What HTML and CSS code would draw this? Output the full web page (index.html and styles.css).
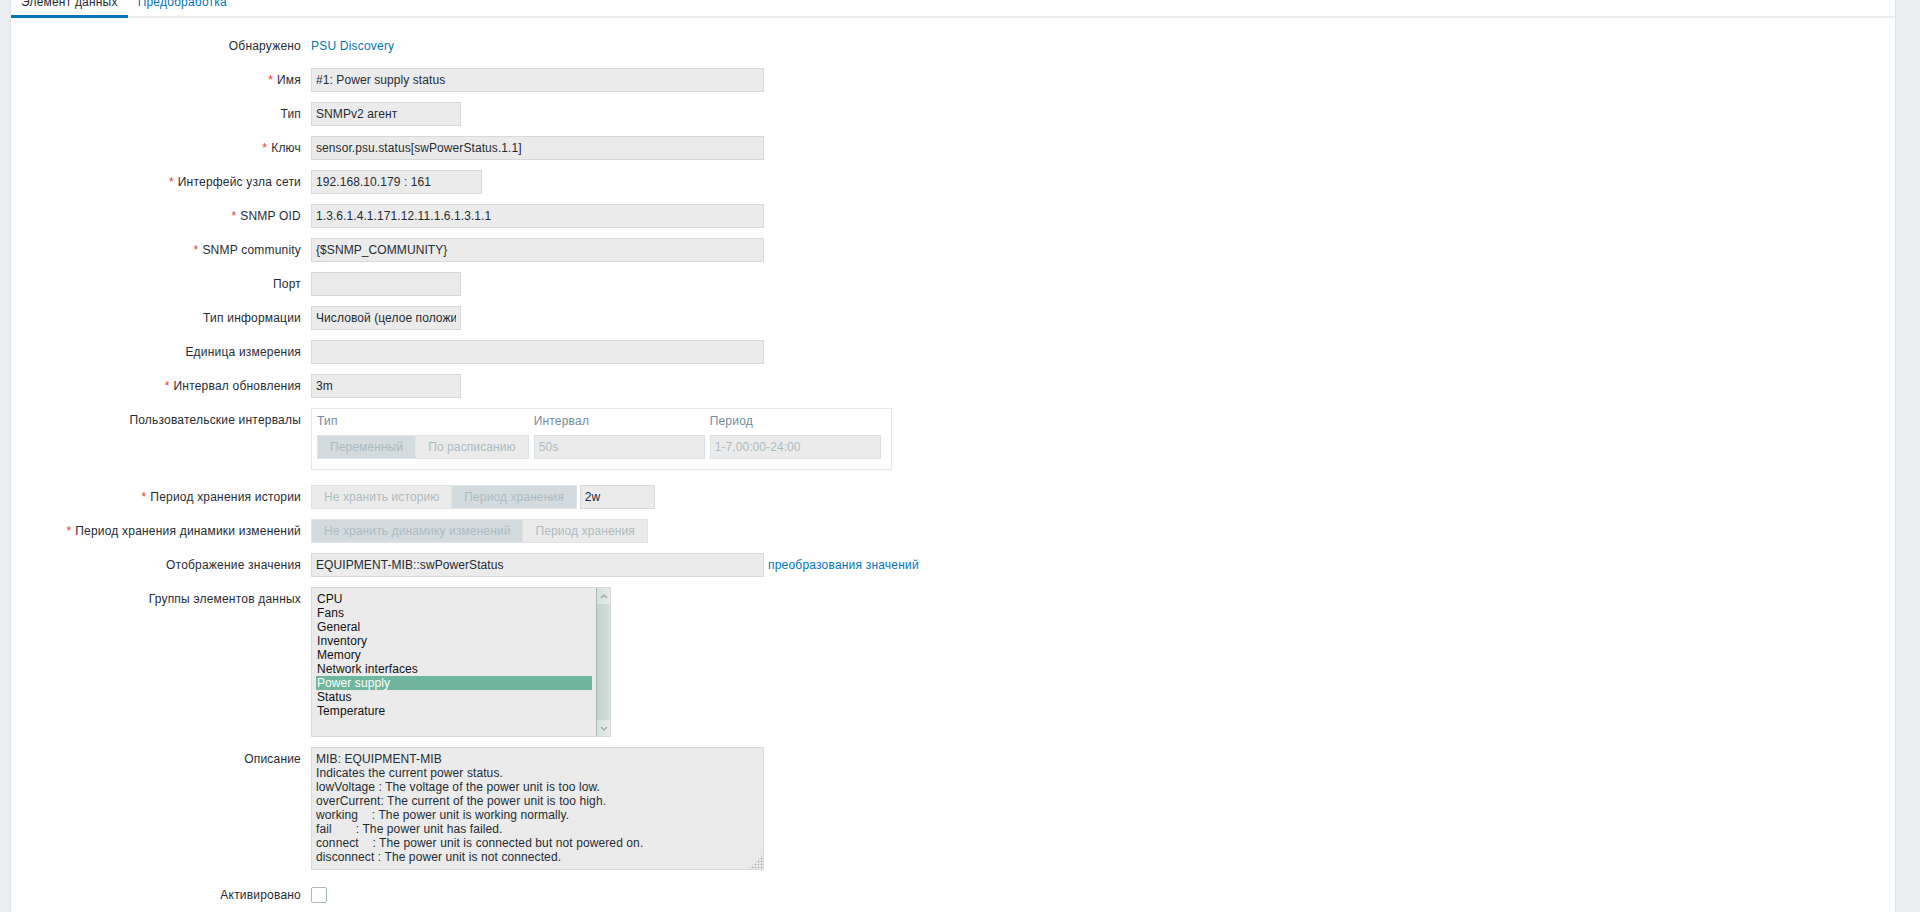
FILE: index.html
```html
<!DOCTYPE html>
<html>
  <head>
    <meta charset="utf-8">
    <title>Элемент данных</title>
    <link rel="stylesheet" href="styles.css">
  </head>
  <body>
    <div class="wrapper">
      <div class="table-forms-container">
        <ul class="tabs-nav">
          <li class="tab active"><a>Элемент данных</a></li>
          <li class="tab"><a href="#preprocessing">Предобработка</a></li>
        </ul>

        <ul class="form-list">
          <li class="form-row">
            <label class="form-label">Обнаружено</label>
            <div class="form-field"><a href="#discovery">PSU Discovery</a></div>
          </li>
          <li class="form-row">
            <label class="form-label required">Имя</label>
            <div class="form-field"><input class="input w-standard" value="#1: Power supply status" readonly></div>
          </li>
          <li class="form-row">
            <label class="form-label">Тип</label>
            <div class="form-field"><input class="input w-small" value="SNMPv2 агент" readonly></div>
          </li>
          <li class="form-row">
            <label class="form-label required">Ключ</label>
            <div class="form-field"><input class="input w-standard" value="sensor.psu.status[swPowerStatus.1.1]" readonly></div>
          </li>
          <li class="form-row">
            <label class="form-label required">Интерфейс узла сети</label>
            <div class="form-field"><input class="input w-select" value="192.168.10.179 : 161" readonly></div>
          </li>
          <li class="form-row">
            <label class="form-label required">SNMP OID</label>
            <div class="form-field"><input class="input w-standard" value="1.3.6.1.4.1.171.12.11.1.6.1.3.1.1" readonly></div>
          </li>
          <li class="form-row">
            <label class="form-label required">SNMP community</label>
            <div class="form-field"><input class="input w-standard" value="{$SNMP_COMMUNITY}" readonly></div>
          </li>
          <li class="form-row">
            <label class="form-label">Порт</label>
            <div class="form-field"><input class="input w-small" value="" readonly></div>
          </li>
          <li class="form-row">
            <label class="form-label">Тип информации</label>
            <div class="form-field"><input class="input w-small" value="Числовой (целое положительное)" readonly></div>
          </li>
          <li class="form-row">
            <label class="form-label">Единица измерения</label>
            <div class="form-field"><input class="input w-standard" value="" readonly></div>
          </li>
          <li class="form-row">
            <label class="form-label required">Интервал обновления</label>
            <div class="form-field"><input class="input w-small" value="3m" readonly></div>
          </li>
          <li class="form-row row-spaced">
            <label class="form-label">Пользовательские интервалы</label>
            <div class="form-field">
              <div class="interval-box">
                <span class="col-title">Тип</span>
                <span class="col-title">Интервал</span>
                <span class="col-title">Период</span>
                <div class="segmented">
                  <span class="segment checked">Переменный</span>
                  <span class="segment">По расписанию</span>
                </div>
                <input class="input disabled" value="50s" disabled>
                <input class="input disabled" value="1-7,00:00-24:00" disabled>
              </div>
            </div>
          </li>
          <li class="form-row">
            <label class="form-label required">Период хранения истории</label>
            <div class="form-field gap-tight">
              <div class="segmented">
                <span class="segment">Не хранить историю</span>
                <span class="segment checked">Период хранения</span>
              </div>
              <input class="input w-tiny" value="2w" readonly>
            </div>
          </li>
          <li class="form-row">
            <label class="form-label required">Период хранения динамики изменений</label>
            <div class="form-field">
              <div class="segmented">
                <span class="segment checked">Не хранить динамику изменений</span>
                <span class="segment">Период хранения</span>
              </div>
            </div>
          </li>
          <li class="form-row">
            <label class="form-label">Отображение значения</label>
            <div class="form-field">
              <input class="input w-standard" value="EQUIPMENT-MIB::swPowerStatus" readonly>
              <a href="#valuemap">преобразования значений</a>
            </div>
          </li>
          <li class="form-row">
            <label class="form-label">Группы элементов данных</label>
            <div class="form-field">
              <div class="listbox">
                <ul class="listbox-items">
                  <li>CPU</li>
                  <li>Fans</li>
                  <li>General</li>
                  <li>Inventory</li>
                  <li>Memory</li>
                  <li>Network interfaces</li>
                  <li class="selected">Power supply</li>
                  <li>Status</li>
                  <li>Temperature</li>
                </ul>
                <div class="listbox-scroll">
                  <span class="scroll-btn">
                    <svg width="8" height="5" viewBox="0 0 8 5"><polyline points="1,4 4,1 7,4" fill="none" stroke="#93a7a0" stroke-width="1.2"/></svg>
                  </span>
                  <span class="scroll-thumb"></span>
                  <span class="scroll-btn">
                    <svg width="8" height="5" viewBox="0 0 8 5"><polyline points="1,1 4,4 7,1" fill="none" stroke="#93a7a0" stroke-width="1.2"/></svg>
                  </span>
                </div>
              </div>
            </div>
          </li>
          <li class="form-row row-textarea">
            <label class="form-label">Описание</label>
            <div class="form-field">
              <textarea class="textarea" readonly>MIB: EQUIPMENT-MIB
Indicates the current power status.
lowVoltage : The voltage of the power unit is too low.
overCurrent: The current of the power unit is too high.
working    : The power unit is working normally.
fail       : The power unit has failed.
connect    : The power unit is connected but not powered on.
disconnect : The power unit is not connected.</textarea>
            </div>
          </li>
          <li class="form-row">
            <label class="form-label">Активировано</label>
            <div class="form-field"><input type="checkbox" class="checkbox"></div>
          </li>
        </ul>
      </div>
    </div>
  </body>
</html>
```

FILE: styles.css
```css
:root {
  --page-bg: #ebeef0;
  --text-color: #1f2c33;
  --link-color: #0275b8;
  --field-bg: #ebebeb;
  --field-border: #d6dadc;
  --segment-border: #dfe4e7;
  --segment-checked: #d3dbdf;
  --muted-color: #768d99;
  --disabled-color: #acbbc2;
  --selected-bg: #70b59d;
}

*, *:before, *:after {
  box-sizing: border-box;
}

html, body {
  height: 100%;
  margin: 0;
  padding: 0;
}

body {
  background: var(--page-bg);
  font-family: "Liberation Sans", Arial, sans-serif;
  font-size: 12px;
  line-height: 14px;
  letter-spacing: 0.2px;
  color: var(--text-color);
  overflow: hidden;
}

ul {
  margin: 0;
  padding: 0;
  list-style: none;
}

a {
  color: var(--link-color);
  text-decoration: none;
}

/* page is scrolled a little, so the tab strip is cut at the top */
.wrapper {
  margin-top: -13px;
  padding: 0 24px 0 10px;
}

.table-forms-container {
  background: #fff;
  border: 1px solid var(--segment-border);
  border-top: none;
  min-height: calc(100vh + 13px);
}

/*----- TABS -----*/

.tabs-nav {
  display: flex;
  border-bottom: 2px solid var(--page-bg);
}

.tab {
  margin-bottom: -2px;
  padding: 8px 10px 6px;
  border-bottom: 3px solid transparent;
}

.tab.active {
  border-bottom-color: var(--link-color);
}

.tab.active a {
  color: var(--text-color);
}

/*----- FORM -----*/

.form-list {
  padding-top: 16px;
}

.form-row {
  display: flex;
  margin-bottom: 10px;
}

.form-row.row-spaced {
  margin-bottom: 15px;
}

.form-row.row-textarea {
  margin-bottom: 13px;
}

.form-label {
  flex: 0 0 300px;
  padding: 5px 10px 0 0;
  text-align: right;
  white-space: nowrap;
}

.form-label.required::before {
  content: "*";
  color: #e33734;
  margin-right: 4px;
}

.form-field {
  display: flex;
  align-items: center;
  gap: 4px;
  min-height: 24px;
}

.form-field.gap-tight {
  gap: 3px;
}

.input {
  height: 24px;
  margin: 0;
  padding: 0 4px;
  border: 1px solid var(--field-border);
  background: var(--field-bg);
  color: var(--text-color);
  font: inherit;
  letter-spacing: 0.08px;
  outline: none;
}

.input.disabled {
  color: var(--disabled-color);
  border-color: #dcdfe1;
}

.w-standard { width: 453px; }
.w-select { width: 171px; }
.w-small { width: 150px; }
.w-tiny { width: 75px; }

/* radio buttons drawn as one segmented bar */
.segmented {
  display: inline-flex;
}

.segment {
  height: 24px;
  line-height: 22px;
  padding: 0 12px;
  border: 1px solid var(--segment-border);
  background: var(--field-bg);
  color: var(--disabled-color);
  letter-spacing: 0.1px;
  white-space: nowrap;
}

.segment + .segment {
  margin-left: -1px;
}

.segment.checked {
  background: var(--segment-checked);
}

.interval-box {
  display: inline-grid;
  grid-template-columns: auto 171px 171px;
  column-gap: 5px;
  row-gap: 7px;
  padding: 5px 10px 10px 5px;
  border: 1px solid #e6e9eb;
}

.interval-box .col-title {
  color: var(--muted-color);
}

/*----- LISTBOX -----*/

.listbox {
  display: flex;
  width: 300px;
  height: 150px;
  border: 1px solid var(--field-border);
  background: var(--field-bg);
}

.listbox-items {
  flex: 1 1 auto;
  padding: 4px;
  color: #111;
  letter-spacing: 0.08px;
}

.listbox-items li {
  height: 14px;
  padding-left: 1px;
  white-space: nowrap;
}

.listbox-items li.selected {
  background: var(--selected-bg);
  color: #fff;
}

.listbox-scroll {
  flex: 0 0 14px;
  display: flex;
  flex-direction: column;
  border-left: 1px solid #a6b8b2;
}

.scroll-btn {
  flex: 0 0 16px;
  display: flex;
  align-items: center;
  justify-content: center;
  background: linear-gradient(to right, #d6e0dc, #e4ebe8);
}

.scroll-thumb {
  flex: 1 1 auto;
  background: linear-gradient(to right, #c3d3cd, #d4dfdb);
}

/*----- TEXTAREA / CHECKBOX -----*/

.textarea {
  display: block;
  width: 453px;
  height: 123px;
  margin: 0;
  padding: 4px;
  border: 1px solid var(--field-border);
  background: var(--field-bg);
  color: var(--text-color);
  font: inherit;
  line-height: 14px;
  letter-spacing: 0.1px;
  resize: vertical;
  overflow: hidden;
  outline: none;
}

/* dotted grip in the corner */
.textarea::-webkit-resizer {
  background:
    linear-gradient(to bottom right, var(--field-bg) 50%, transparent 50%),
    radial-gradient(circle, #a4adb2 0.8px, transparent 1.1px) 0 0 / 3px 3px;
}

.checkbox {
  appearance: none;
  width: 16px;
  height: 16px;
  margin: 0;
  border: 1px solid #a9b7be;
  border-radius: 2px;
  background: #fff;
}
```
